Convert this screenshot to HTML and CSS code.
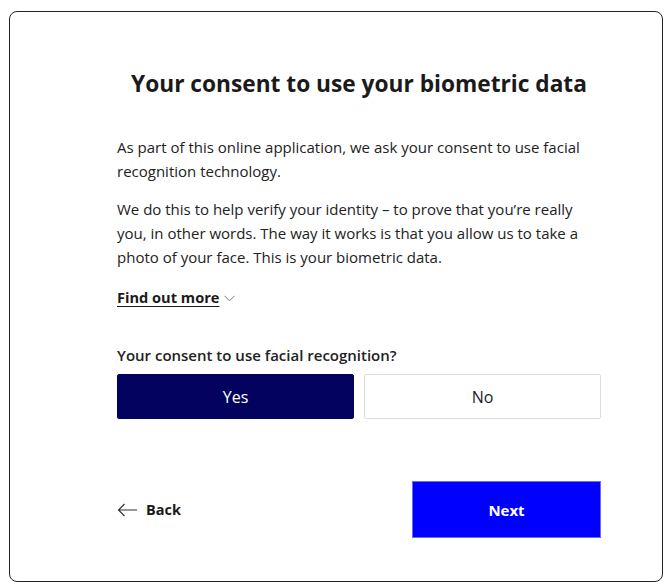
FILE: index.html
```html
<!DOCTYPE html>
<html lang="en">
<head>
<meta charset="utf-8">
<link rel="stylesheet" href="styles.css">
</head>
<body>
<div class="frame">
  <main class="content">
    <h1 class="title">Your consent to use your biometric data</h1>
    <p class="para">As part of this online application, we ask your consent to use facial recognition technology.</p>
    <p class="para">We do this to help verify your identity – to prove that you’re really you, in other words. The way it works is that you allow us to take a photo of your face. This is your biometric data.</p>
    <div class="more">
      <a class="more-link" href="#">Find out more</a>
      <svg class="chev" width="11" height="7" viewBox="0 0 11 7"><path d="M0.5 0.8 L5.5 5.8 L10.5 0.8" fill="none" stroke="#777" stroke-width="1"/></svg>
    </div>
    <div class="question">Your consent to use facial recognition?</div>
    <div class="choices">
      <button class="choice selected">Yes</button>
      <button class="choice">No</button>
    </div>
    <div class="nav">
      <a class="back" href="#">
        <svg width="21" height="14" viewBox="0 0 21 14"><path d="M20 7 H1.5 M7.5 1 L1.5 7 L7.5 13" fill="none" stroke="#333" stroke-width="1.2"/></svg>
        <span>Back</span>
      </a>
      <button class="next">Next</button>
    </div>
  </main>
</div>
</body>
</html>
```
FILE: styles.css
```css
* { box-sizing: border-box; }
html, body { margin: 0; padding: 0; background: #fff; }
body {
  font-family: "Open Sans", "Liberation Sans", sans-serif;
  color: #1a1a1a;
  padding: 11px 9px 6px 9px;
}
.frame {
  width: 654px;
  height: 571px;
  border: 1px solid #222;
  border-radius: 8px;
  padding: 0 60px 0 107px;
}
.content {
  width: 484px;
  display: flex;
  flex-direction: column;
}
.title {
  margin: 56px -20px 0 -20px;
  font-size: 22.7px;
  font-weight: 700;
  line-height: 32px;
  text-align: center;
  color: #1a1a1a;
}
.para {
  margin: 35px 0 0 0;
  font-size: 15px;
  line-height: 24px;
  color: #222;
}
.para + .para { margin-top: 14px; }
.more {
  margin-top: 16px;
  display: flex;
  align-items: center;
  gap: 5px;
  height: 24px;
}
.more-link {
  font-size: 14.6px;
  font-weight: 700;
  color: #1a1a1a;
  text-decoration: underline;
  text-underline-offset: 3px;
  text-decoration-thickness: 1.2px;
}
.chev { margin-top: 2px; }
.question {
  margin-top: 34px;
  font-size: 15px;
  font-weight: 600;
  line-height: 24px;
  color: #222;
}
.choices {
  margin-top: 7px;
  display: flex;
  gap: 10px;
}
.choice {
  flex: 1;
  height: 45px;
  font-family: inherit;
  font-size: 16px;
  color: #1a1a1a;
  background: #fff;
  border: 1px solid #ddd;
  border-radius: 2px;
}
.choice.selected {
  background: #03035f;
  border-color: #03035f;
  color: #fff;
}
.nav {
  margin-top: 62px;
  display: flex;
  justify-content: space-between;
  align-items: center;
}
.back {
  display: flex;
  align-items: center;
  gap: 8px;
  text-decoration: none;
  color: #1a1a1a;
  font-size: 14.5px;
  font-weight: 700;
}
.next {
  width: 189px;
  height: 57px;
  background: #0000ff;
  color: #fff;
  border: 1px solid #6a6aff;
  font-family: inherit;
  font-size: 15px;
  font-weight: 700;
}
```
